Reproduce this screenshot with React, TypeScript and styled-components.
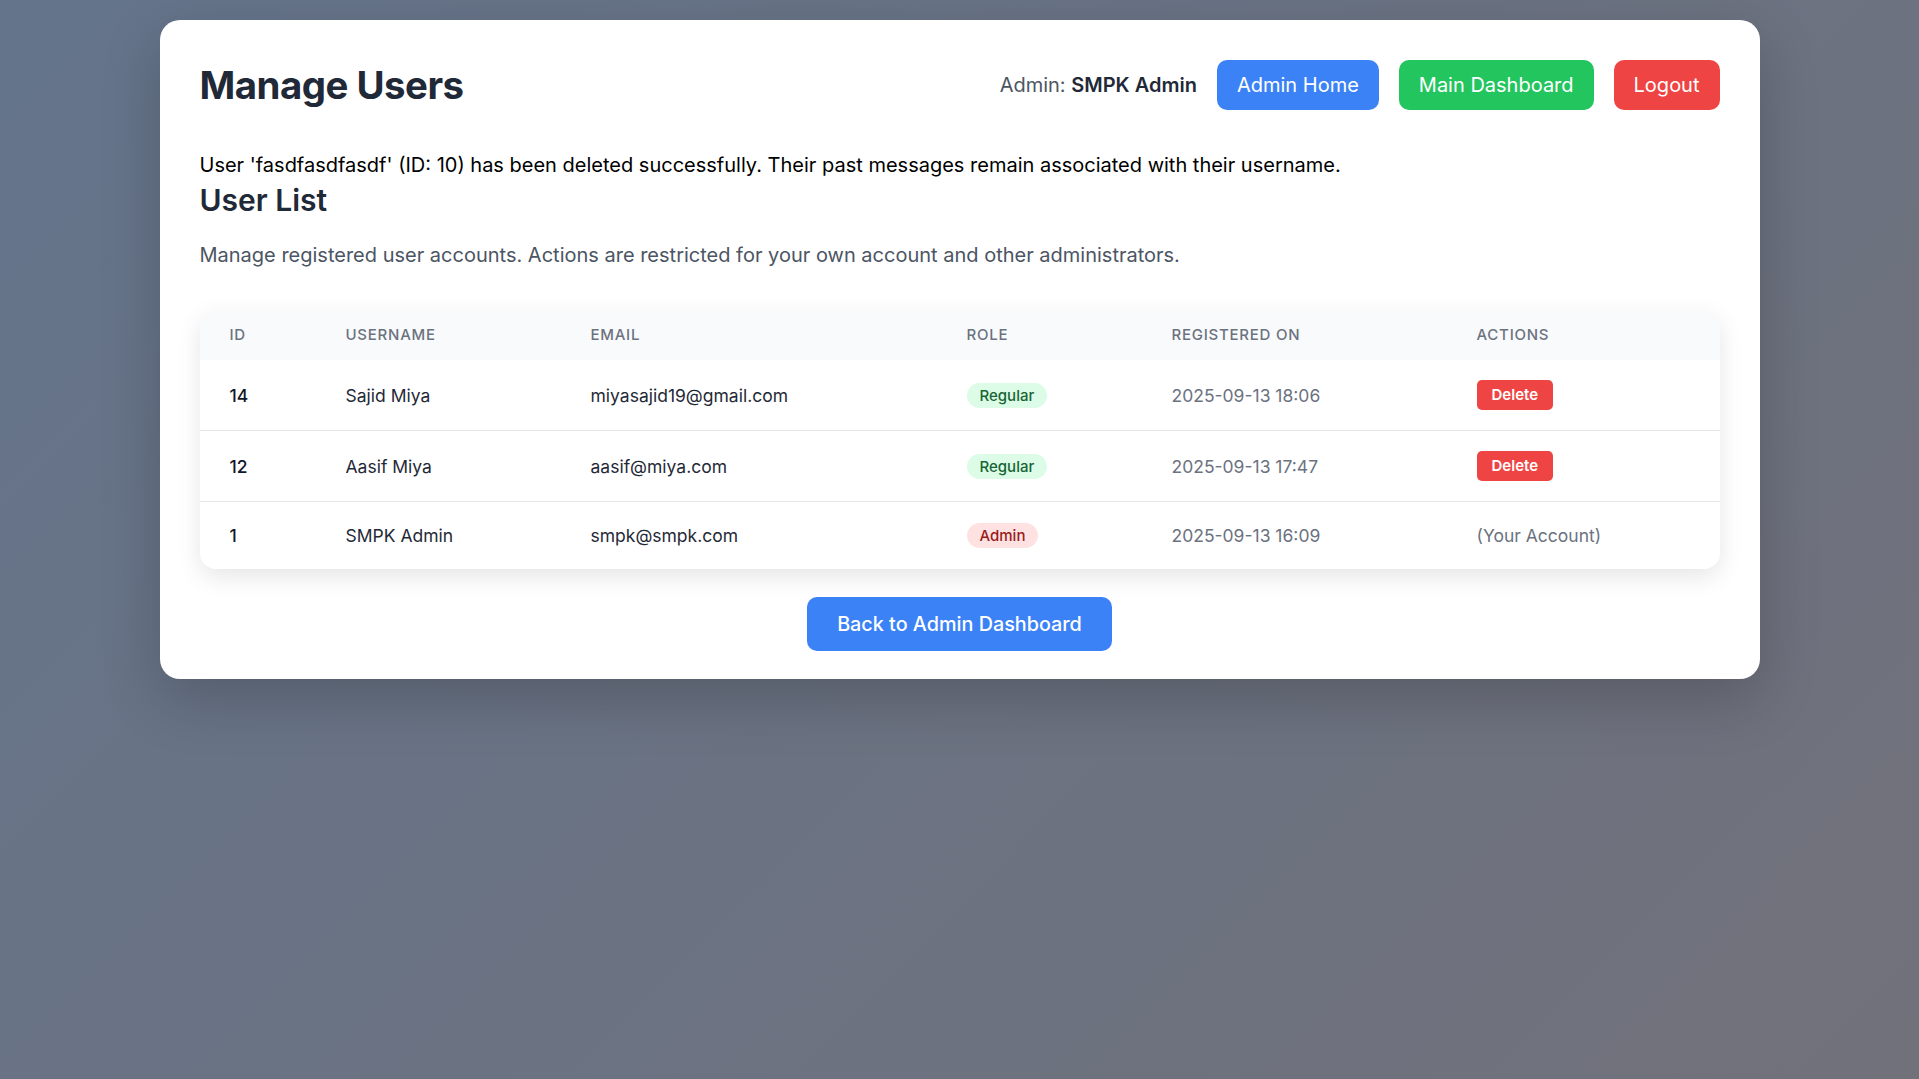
import React from 'react';
import styled, {createGlobalStyle} from "styled-components";

const GlobalStyle = createGlobalStyle`
  * {
    box-sizing: border-box;
  }
  html, body {
    margin: 0;
    min-height: 100%;
  }
  body {
    min-height: 1079px;
    padding: 20px;
    font-family: "Inter", "Liberation Sans", sans-serif;
    background: linear-gradient(135deg, #64748b, #71717a);
    background-attachment: fixed;
    color: #000;
  }
`

const Container = styled.div`
  max-width: 1600px;
  margin: 0 auto;
  padding: 40px 40px 39px;
  background: #fff;
  border-radius: 20px;
  box-shadow: 0 20px 60px rgba(0, 0, 0, 0.2);
`

const Header = styled.header`
  display: flex;
  justify-content: space-between;
  align-items: center;
  margin-bottom: 41px;
`

const Title = styled.h1`
  margin: 0;
  font-size: 38.4px;
  font-weight: 700;
  letter-spacing: -0.5px;
  color: #1f2937;
`

const Nav = styled.nav`
  display: flex;
  align-items: center;
  gap: 20px;
`

const AdminLabel = styled.span`
  font-size: 20px;
  color: #4b5563;

  strong {
    font-weight: 600;
    color: #1f2937;
  }
`

const NavButton = styled.a<{ $bg: string }>`
  display: inline-block;
  padding: 12px 20px;
  border-radius: 10px;
  background: ${p => p.$bg};
  color: #fff;
  font-size: 20px;
  font-weight: 400;
  line-height: 26px;
`

const Message = styled.p`
  margin: 0 0 1px;
  font-size: 20px;
  line-height: 28px;
`

const SectionTitle = styled.h2`
  margin: 0 0 20px;
  font-size: 30px;
  font-weight: 600;
  line-height: 41px;
  color: #1f2937;
`

const Note = styled.p`
  margin: 0 0 41px;
  font-size: 20px;
  line-height: 28px;
  color: #4b5563;
`

const Table = styled.table`
  width: 100%;
  table-layout: fixed;
  border-collapse: separate;
  border-spacing: 0;
  border-radius: 16px;
  overflow: hidden;
  box-shadow: 0 8px 24px rgba(0, 0, 0, 0.1);
`

const Th = styled.th<{ $width: number }>`
  width: ${p => p.$width}px;
  padding: 15px 30px 16px;
  background: #f9fafb;
  text-align: left;
  font-size: 15px;
  font-weight: 500;
  line-height: 19px;
  letter-spacing: 0.75px;
  text-transform: uppercase;
  color: #6b7280;
`

const Row = styled.tr`
  &:not(:last-child) td {
    border-bottom: 1px solid #e5e7eb;
  }
`

const Td = styled.td<{ $tone?: string }>`
  padding: 20px 30px;
  font-size: 17.5px;
  line-height: 27px;
  color: ${p => p.$tone || '#1f2937'};
`

const IdCell = styled(Td)`
  font-weight: 500;
  color: #111827;
`

const RoleBadge = styled.span<{ $admin?: boolean }>`
  display: inline-block;
  padding: 3px 13px;
  border-radius: 999px;
  font-size: 15px;
  font-weight: 500;
  line-height: 19px;
  vertical-align: 1px;
  background: ${p => p.$admin ? '#fee2e2' : '#dcfce7'};
  color: ${p => p.$admin ? '#991b1b' : '#166534'};
`

const DeleteButton = styled.button`
  display: block;
  padding: 6px 15px;
  border: none;
  border-radius: 5px;
  background: #ef4444;
  color: #fff;
  font-family: inherit;
  font-size: 15px;
  font-weight: 600;
  line-height: 18px;
`

const Footer = styled.div`
  margin-top: 41px;
  text-align: center;
  line-height: 29px;
`

const BackButton = styled.a`
  padding: 15px 30px;
  border-radius: 10px;
  background: #3b82f6;
  color: #fff;
  font-size: 19.8px;
  font-weight: 500;
`

const columns = [
    {label: 'ID', width: 116},
    {label: 'Username', width: 245},
    {label: 'Email', width: 376},
    {label: 'Role', width: 205},
    {label: 'Registered On', width: 305},
    {label: 'Actions', width: 273},
]

const users = [
    {id: 14, name: 'Sajid Miya', email: 'miyasajid19@gmail.com', role: 'Regular', date: '2025-09-13 18:06'},
    {id: 12, name: 'Aasif Miya', email: 'aasif@miya.com', role: 'Regular', date: '2025-09-13 17:47'},
    {id: 1, name: 'SMPK Admin', email: 'smpk@smpk.com', role: 'Admin', date: '2025-09-13 16:09'},
]

const App = () => {
    return (
        <>
            <GlobalStyle/>
            <Container>
                <Header>
                    <Title>Manage Users</Title>
                    <Nav>
                        <AdminLabel>Admin: <strong>SMPK Admin</strong></AdminLabel>
                        <NavButton $bg="#3b82f6">Admin Home</NavButton>
                        <NavButton $bg="#22c55e">Main Dashboard</NavButton>
                        <NavButton $bg="#ef4444">Logout</NavButton>
                    </Nav>
                </Header>

                <Message>User 'fasdfasdfasdf' (ID: 10) has been deleted successfully. Their past messages remain associated with their username.</Message>
                <SectionTitle>User List</SectionTitle>
                <Note>Manage registered user accounts. Actions are restricted for your own account and other administrators.</Note>

                <Table>
                    <thead>
                    <tr>
                        {columns.map(col => <Th key={col.label} $width={col.width}>{col.label}</Th>)}
                    </tr>
                    </thead>
                    <tbody>
                    {users.map(user => (
                        <Row key={user.id}>
                            <IdCell>{user.id}</IdCell>
                            <Td>{user.name}</Td>
                            <Td>{user.email}</Td>
                            <Td><RoleBadge $admin={user.role === 'Admin'}>{user.role}</RoleBadge></Td>
                            <Td $tone="#6b7280">{user.date}</Td>
                            <Td $tone="#6b7280">
                                {user.role === 'Admin' ? '(Your Account)' : <DeleteButton>Delete</DeleteButton>}
                            </Td>
                        </Row>
                    ))}
                    </tbody>
                </Table>

                <Footer>
                    <BackButton>Back to Admin Dashboard</BackButton>
                </Footer>
            </Container>
        </>
    );
};

export default App;
